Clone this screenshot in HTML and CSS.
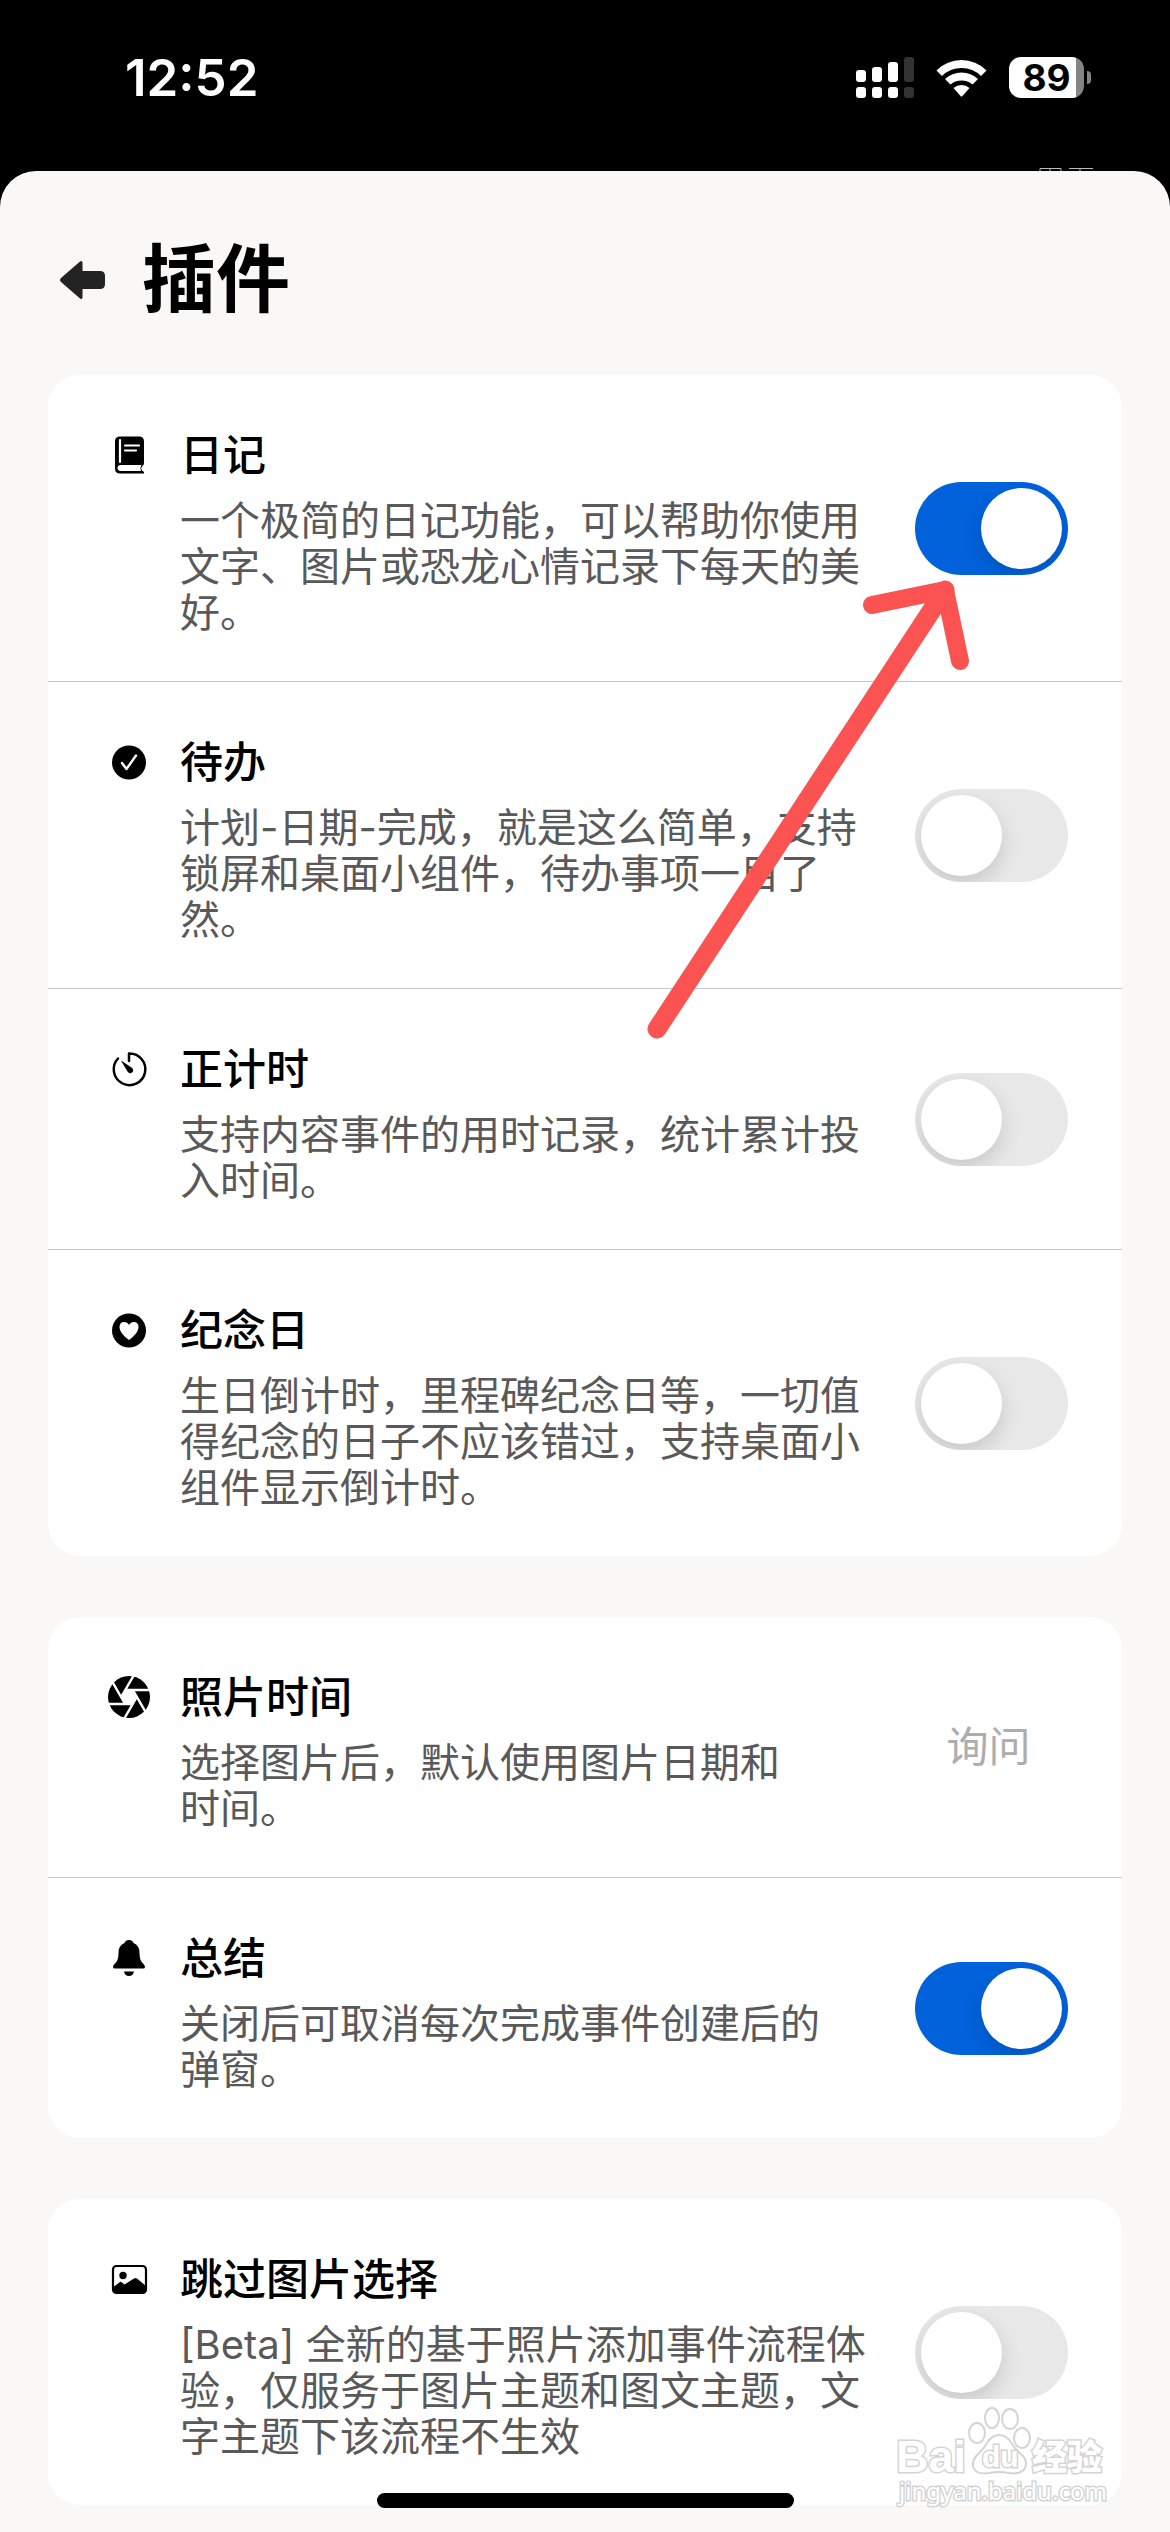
FILE: index.html
```html
<!DOCTYPE html>
<html lang="zh-CN">
<head>
<meta charset="utf-8">
<meta name="viewport" content="width=device-width, initial-scale=1">
<title>插件</title>
<link rel="stylesheet" href="styles.css">
</head>
<body>
<div class="phone">
  <div class="status-bar">
    <span class="clock">12:52</span>
    <div class="status-icons">
      <svg class="signal" width="58" height="42" viewBox="0 0 58 42" fill="#fff" aria-hidden="true">
        <rect x="0" y="13" width="10" height="12" rx="3"/><rect x="16" y="10" width="10" height="15" rx="3"/><rect x="32" y="5" width="10" height="20" rx="3"/><rect x="48" y="0" width="10" height="25" rx="3" fill="#333"/>
        <rect x="0" y="30" width="10" height="11" rx="3"/><rect x="16" y="30" width="10" height="11" rx="3"/><rect x="32" y="30" width="10" height="11" rx="3"/><rect x="48" y="30" width="10" height="11" rx="3" fill="#333"/>
      </svg>
      <svg class="wifi" width="51" height="38" viewBox="0 0 51 38" fill="#fff" aria-hidden="true">
        <path d="M0.500 11.500Q11 1 25.500 1Q40 1 50.500 11.500L45 17Q37 9 25.500 9Q14 9 6 17Z"/>
        <path d="M9 20Q16 13.500 25.500 13.500Q35 13.500 42 20L36.500 25.500Q32 21.500 25.500 21.500Q19 21.500 14.500 25.500Z"/>
        <path d="M17.500 29Q21 26 25.500 26Q30 26 33.500 29L26.500 37Q25.500 38 24.500 37Z"/>
      </svg>
      <div class="battery"><span class="battery-level">89</span></div>
    </div>
  </div>
  <svg class="behind" width="56" height="4" viewBox="0 0 56 4" fill="none" stroke="#bbb" stroke-width="1" aria-hidden="true"><path d="M1 4V1.500H22V4M11 2V4M30 1.500H54M41 2V4"/></svg>

  <main class="sheet">
    <header class="sheet-header">
      <button class="back" type="button" aria-label="返回">
        <svg width="46" height="40" viewBox="0 0 46 40" fill="#232323" aria-hidden="true"><path d="M0 20Q0 19 1 18L20 1.500Q22.500 0 22.500 3V11H40Q45 11 45 16V24Q45 29 40 29H22.500V37Q22.500 40 20 38.500L1 22Q0 21 0 20Z"/></svg>
      </button>
      <h1 class="title">插件</h1>
    </header>

    <section class="card">
      <div class="row">
        <svg class="icon" viewBox="0 0 42 42" aria-hidden="true"><path fill-rule="evenodd" d="M12 2.500H31Q36 2.500 36 7.500V29Q36 31 34.500 32Q32 34.500 34.500 37Q36 37 36 38.500V39.500H12Q7 39.500 7 34.500V7.500Q7 2.500 12 2.500ZM13 31Q9.500 31 9.500 34Q9.500 37 13 37H33Q31.500 34 33.500 31Z"/><path d="M12 6V28M17 11.500H31M17 16.500H28" fill="none" stroke="#fff" stroke-width="2.200" stroke-linecap="round"/></svg>
        <div class="text">
          <h2 class="name"><label for="diary">日记</label></h2>
          <p class="desc">一个极简的日记功能，可以帮助你使用文字、图片或恐龙心情记录下每天的美好。</p>
        </div>
        <input class="switch" type="checkbox" id="diary" checked>
      </div>
      <div class="row">
        <svg class="icon" viewBox="0 0 42 42" aria-hidden="true"><circle cx="21" cy="21.500" r="17"/><path d="M14 22L18.500 28L28 14.500" fill="none" stroke="#fff" stroke-width="2.400" stroke-linecap="round" stroke-linejoin="round"/></svg>
        <div class="text">
          <h2 class="name"><label for="todo">待办</label></h2>
          <p class="desc">计划-日期-完成，就是这么简单，支持锁屏和桌面小组件，待办事项一目了然。</p>
        </div>
        <input class="switch" type="checkbox" id="todo">
      </div>
      <div class="row">
        <svg class="icon" viewBox="0 0 42 42" aria-hidden="true"><path d="M21 13V5.500A15.800 15.800 0 1 1 10 10.500" fill="none" stroke="#000" stroke-width="2.500" stroke-linecap="round" stroke-linejoin="round"/><path d="M13.500 13.500Q12.800 13 13.400 12.800L23.500 19.500A3 3 0 1 1 19.500 23.500Z"/></svg>
        <div class="text">
          <h2 class="name"><label for="timer">正计时</label></h2>
          <p class="desc">支持内容事件的用时记录，统计累计投入时间。</p>
        </div>
        <input class="switch" type="checkbox" id="timer">
      </div>
      <div class="row">
        <svg class="icon" viewBox="0 0 42 42" aria-hidden="true"><circle cx="21" cy="21.500" r="17"/><path d="M21 31Q11.500 24 11.500 18.500Q11.500 13 16 13Q19.500 13 21 16Q22.500 13 26 13Q30.500 13 30.500 18.500Q30.500 24 21 31Z" fill="#fff"/></svg>
        <div class="text">
          <h2 class="name"><label for="anniversary">纪念日</label></h2>
          <p class="desc">生日倒计时，里程碑纪念日等，一切值得纪念的日子不应该错过，支持桌面小组件显示倒计时。</p>
        </div>
        <input class="switch" type="checkbox" id="anniversary">
      </div>
    </section>

    <section class="card">
      <div class="row">
        <svg class="icon" viewBox="0 0 42 42" aria-hidden="true"><circle cx="21" cy="21" r="21"/><path d="M17.300 14H42.500M24.900 14L37.500 35.800M28.800 21L16 43M24.700 28H-0.500M17.100 28L4.500 6.200M13.200 21L26 -1" fill="none" stroke="#fff" stroke-width="2.400"/><path d="M17.300 14H24.900L28.800 21L24.700 28H17.100L13.200 21Z" fill="#fff"/></svg>
        <div class="text">
          <h2 class="name" id="photo-time">照片时间</h2>
          <p class="desc">选择图片后，默认使用图片日期和<span class="word">时间。</span></p>
        </div>
        <button class="choice" type="button" aria-describedby="photo-time">询问</button>
      </div>
      <div class="row">
        <svg class="icon" viewBox="0 0 42 42" aria-hidden="true"><path d="M21 3Q24.500 3 25.500 6Q31.500 8.500 31.500 16Q31.500 24 35.500 27Q37 28.500 37 30Q37 31.500 35 31.500H7Q5 31.500 5 30Q5 28.500 6.500 27Q10.500 24 10.500 16Q10.500 8.500 16.500 6Q17.500 3 21 3ZM16 34.500H26Q25 39 21 39Q17 39 16 34.500Z"/></svg>
        <div class="text">
          <h2 class="name"><label for="summary">总结</label></h2>
          <p class="desc">关闭后可取消每次完成事件创建后的<span class="word">弹窗。</span></p>
        </div>
        <input class="switch" type="checkbox" id="summary" checked>
      </div>
    </section>

    <section class="card">
      <div class="row">
        <svg class="icon" viewBox="0 0 42 42" aria-hidden="true"><rect x="5" y="8" width="33" height="27" rx="3.500" fill="none" stroke="#000" stroke-width="2.200"/><circle cx="15" cy="17.500" r="3.700"/><path d="M5.500 29L12 24Q13 23.500 14 24.500L16.500 26.500L26 20.500Q27.500 19.500 29 20.500L38 28V33Q38 35 35 35H8Q5.500 35 5.500 33Z"/></svg>
        <div class="text">
          <h2 class="name"><label for="skip">跳过图片选择</label></h2>
          <p class="desc">[Beta] 全新的基于照片添加事件流程体验，仅服务于图片主题和图文主题，文字主题下该流程不生效</p>
        </div>
        <input class="switch" type="checkbox" id="skip">
      </div>
    </section>
  </main>

  <svg class="pointer" width="330" height="480" viewBox="0 0 330 480" fill="none" stroke="#fb5252" stroke-linecap="round" stroke-linejoin="round" aria-hidden="true"><path d="M17 459L305 20" stroke-width="19"/><path d="M232 35L305 20L320 91" stroke-width="18"/></svg>

  <svg class="watermark" width="230" height="106" viewBox="0 0 230 106" aria-hidden="true">
    <g fill="#fff" stroke="#d4d4d4" stroke-width="3">
      <text class="wm-latin" x="6" y="68">Bai</text>
      <g stroke-width="2">
        <ellipse cx="87" cy="29" rx="8" ry="10"/><ellipse cx="102" cy="14" rx="7" ry="10"/><ellipse cx="120" cy="15" rx="8" ry="10"/><ellipse cx="132" cy="34" rx="8" ry="10"/>
        <path d="M109 31Q117 31 122 40Q126 46 132 51Q138 57 135 64Q131 71 119 69Q109 67 99 69Q86 71 83 63Q82 56 88 50Q94 45 97 39Q102 31 109 31Z"/>
      </g>
      <text class="wm-du" x="92" y="63">du</text>
      <text class="wm-cjk" x="142" y="66">经验</text>
      <text class="wm-url" x="9" y="96">jingyan.baidu.com</text>
    </g>
  </svg>
  <div class="home-indicator"></div>
</div>
</body>
</html>
```
FILE: styles.css
```css
* { box-sizing: border-box; }

body {
  margin: 0;
  background: #000;
  color: #000;
  font-family: Inter, "Noto Sans CJK SC", sans-serif;
}

h1, h2, p { margin: 0; }

button {
  padding: 0;
  border: 0;
  background: none;
  font: inherit;
  cursor: pointer;
}

.phone {
  position: relative;
  display: flex;
  flex-direction: column;
  min-height: 100vh;
  overflow: hidden;
}

.status-bar {
  display: flex;
  justify-content: space-between;
  align-items: center;
  height: 171px;
  padding: 0 79px 16px 125px;
  color: #fff;
}

.clock {
  font-size: 51px;
  font-weight: 600;
}

.status-icons {
  display: flex;
  align-items: center;
  gap: 22px;
}

.battery {
  position: relative;
  width: 75px;
  height: 41px;
  margin-right: 7px;
  border-radius: 12px;
  background: linear-gradient(to right, #fff 67px, #848484 67px);
}

.battery::after {
  content: "";
  position: absolute;
  top: 14px;
  right: -7px;
  width: 4px;
  height: 13px;
  border-radius: 0 4px 4px 0;
  background: #848484;
}

.battery-level {
  display: block;
  color: #000;
  font-size: 37px;
  font-weight: 700;
  line-height: 41px;
  text-align: center;
}

.behind {
  position: absolute;
  top: 167px;
  right: 75px;
}

.sheet {
  flex: 1;
  display: flex;
  flex-direction: column;
  gap: 61px;
  padding: 74px 48px 26px;
  border-radius: 36px 36px 0 0;
  background: #f9f8f6;
}

.sheet-header {
  display: flex;
  align-items: center;
  gap: 36px;
  height: 69px;
  padding: 0 12px;
}

.back { display: flex; }

.title {
  font-size: 74px;
  font-weight: 600;
  line-height: 69px;
}

.card {
  border-radius: 32px;
  background: #fff;
}

.row {
  display: flex;
  align-items: center;
  padding: 46px 54px 46px 60px;
}

.row + .row { border-top: 1px solid #c8c8c8; }

.icon {
  flex: none;
  align-self: flex-start;
  width: 42px;
  height: 42px;
  margin: 13px 30px 0 0;
}

.text {
  flex: 1;
  margin-right: 45px;
}

.name {
  margin-bottom: 9px;
  font-size: 43px;
  font-weight: 500;
  line-height: 68px;
}

.desc {
  margin-bottom: -1px;
  color: #595959;
  font-size: 40px;
  line-height: 46px;
}

.word { white-space: nowrap; }

.switch {
  appearance: none;
  flex: none;
  width: 153px;
  height: 93px;
  margin: 0;
  padding: 6px;
  border-radius: 47px;
  background: #e8e8e8;
  overflow: hidden;
  cursor: pointer;
}

.switch::before {
  content: "";
  display: block;
  width: 81px;
  height: 81px;
  border-radius: 50%;
  background: #fff;
  box-shadow: 0 8px 20px rgba(0, 0, 0, 0.14);
}

.switch:checked { background: #0262dc; }

.switch:checked::before { margin-left: auto; }

.choice {
  flex: none;
  width: 153px;
  padding-right: 6px;
  color: #adadad;
  font-size: 42px;
  line-height: 60px;
}

.pointer {
  position: absolute;
  top: 570px;
  right: 200px;
}

.watermark {
  position: absolute;
  right: 50px;
  bottom: 22px;
}

.watermark text { paint-order: stroke; }

.wm-latin { font: 700 45px "Liberation Sans", sans-serif; }
.wm-du { font: 700 30px "Liberation Sans", sans-serif; }
.wm-cjk { font: 900 35px "Noto Sans CJK SC", sans-serif; }
.wm-url { font: 400 24px "Noto Sans", sans-serif; }

.home-indicator {
  position: absolute;
  bottom: 24px;
  left: 50%;
  width: 417px;
  height: 15px;
  margin-left: -208px;
  border-radius: 8px;
  background: #000;
}
```
